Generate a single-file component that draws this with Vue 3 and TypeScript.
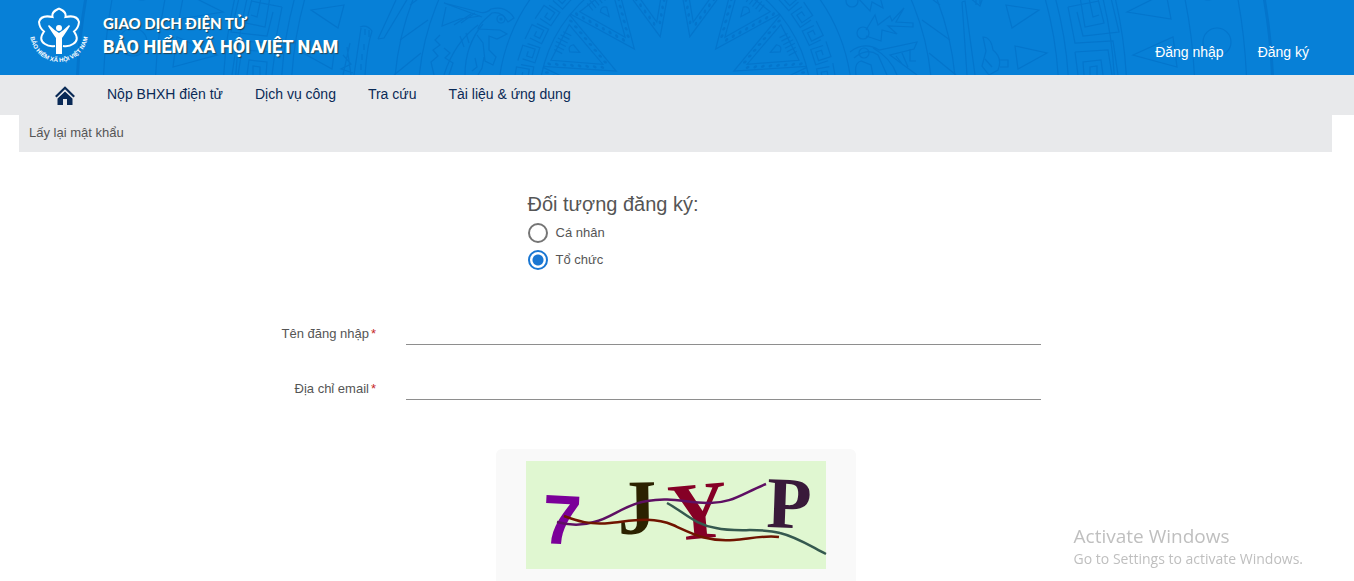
<script setup lang="ts">
import { ref } from 'vue'

interface Wave { d: string; color: string }
interface Glyph { char: string; x: number; y: number; size: number; angle: number; color: string; sans?: boolean }

const navItems: string[] = ['Nộp BHXH điện tử', 'Dịch vụ công', 'Tra cứu', 'Tài liệu & ứng dụng']
const subject = ref<'personal' | 'organization'>('organization')
const username = ref('')
const email = ref('')

const rings: number[] = [136, 177, 257, 281, 384, 394, 440, 452, 520, 572]
const rays: number[] = [-88, -63, -38, -13, 13, 38, 63, 88]
const dots: number[] = [0, 1, 2, 3, 4, 5, 6, 7]
const keys: number[] = Array.from({ length: 23 }, (_, i) => -88 + i * 8)

const glyphs: Glyph[] = [
  { char: '7', x: 15, y: 82, size: 70, angle: 3, color: '#7b0099', sans: true },
  { char: 'J', x: 92, y: 73, size: 78, angle: -1, color: '#2c2200' },
  { char: 'Y', x: 145, y: 80, size: 82, angle: -5, color: '#850026' },
  { char: 'P', x: 240, y: 66, size: 73, angle: 2, color: '#391a3a' }
]
const waves: Wave[] = [
  { d: 'M31 61 C42 64 55 65 68 61 C86 57 99 43 121 40 C143 36 158 41 181 42 C205 43 217 32 240 23', color: '#5e0f63' },
  { d: 'M38 55 C51 60 64 64 84 62 C105 60 126 55 147 64 C169 74 182 81 208 79 C222 78 238 74 253 76', color: '#701400' },
  { d: 'M141 42 C158 51 169 64 190 67 C211 72 232 66 254 72 C271 76 286 86 300 93', color: '#35594f' }
]
</script>

<template>
  <div class="page">
    <header class="banner">
      <svg class="pattern" viewBox="0 0 1354 75" preserveAspectRatio="xMidYMin slice" aria-hidden="true">
        <g class="etch">
          <circle v-for="r in rings" :key="r" cx="675" cy="101" :r="r" />
          <circle class="thick" cx="675" cy="101" r="598" />
          <g v-for="a in rays" :key="'ray' + a" :transform="`rotate(${a} 675 101)`">
            <path d="M646 -32 L675 35 L704 -32 M655 -28 L675 20 L695 -28 Z" />
            <path d="M666 -30 v9 M670 -31 v10 M674 -32 v11 M678 -32 v11 M682 -31 v10 M686 -30 v9 M671 -15 q4 -5 8 0 l-4 9z" />
            <template v-for="n in dots" :key="n">
              <ellipse class="dot" :cx="651 + n * 3" :cy="-28 + n * 7" rx="1.3" ry="2" />
              <ellipse class="dot" :cx="699 - n * 3" :cy="-28 + n * 7" rx="1.3" ry="2" />
            </template>
          </g>
          <g v-for="a in keys" :key="'key' + a" :transform="`rotate(${a} 675 101)`">
            <path d="M665 -61 H681 V-48 H672 V-54 H677 M668 -57 V-44 H684 V-57" />
          </g>
          <g v-for="side in [1, -1]" :key="side" :transform="side === 1 ? undefined : 'translate(1350 0) scale(-1 1)'">
            <path d="M1006 5 L1039 10 L1012 28 Z M1015 46 L1047 53 L1018 69 Z" />
            <path d="M1127 12 L1155 -2 L1167 -2 L1171 19 Z M1133 55 L1173 37 L1177 67 Z" />
            <circle cx="1217" cy="42" r="14" />
            <circle cx="1208" cy="-9" r="9" />
            <path d="M1080 -3 L1085 27 L1104 23 L1098 -1 M1089 -2 L1093 17 L1099 15 M1068 7 L1099 1 M1068 7 L1075 43 L1113 41 L1118 75 M1077 12 L1083 36 L1119 32 L1111 -2 M1075 52 L1108 50 L1112 75 M1075 52 L1078 75 M1084 75 L1083 62 L1101 60 L1103 75 M1090 75 V67 L1097 66 V75" />
            <path d="M922 20 L950 40 M929 53 L956 75 M928 -4 L940 5" />
          </g>
          <path d="M444 3 L479 12 Q486 14 491 9 Q506 5 514 18 L508 22 Q502 11 492 13 Q478 25 478 29 L500 30 L507 34 L497 39 L489 36 L489 50 L496 57 L493 65 L485 61 L483 43 L477 35 M446 7 L442 26 L460 19 L480 16 M444 3 L482 17 M461 23 L475 13 M454 25 L471 14 M478 25 Q454 43 444 75 M483 24 Q465 45 465 75" />
          <circle cx="501" cy="19" r="4" /><circle cx="501" cy="19" r="1" />
          <path d="M440 35 L435 40 L440 45 L433 50 L438 56 L431 62 L434 75 M444 48 L450 53 L445 58 L453 63 L449 75 M460 36 L464 47 M466 33 L469 43 M484 57 L482 68 L478 75 M475 58 L477 67 L472 71" />
          <path d="M360 27 Q367 24 372 31 Q367 46 365 75 M361 28 L354 75 M350 43 L343 75 M347 47 L351 75 M343 55 L351 64 L341 69 L353 73 M364 44 V50 M362 54 V60 M361 64 V70 M378 39 L396 0 M378 39 L384 38 L408 -2 M365 29 v6 M369 30 v7" />
          <circle cx="852" cy="1" r="6" />
          <path d="M857 -3 L870 11 L872 2 L883 8 L880 -3 M866 30 L875 15 L878 25 L890 16 L892 21 L904 8 L896 22 L913 23 L913 27 L888 26 L897 34 L882 30 L881 41 L866 36" />
          <circle cx="863" cy="33" r="6" />
          <path d="M850 52 Q864 41 879 50 L917 42 L914 49 L890 55 L917 75 M854 58 Q867 47 878 55 L887 75 M873 48 Q891 58 897 75 M856 75 Q854 63 861 61 L871 65 L873 75 M910 49 V61 H916 M896 56 L903 65 M902 53 L908 67" />
          <circle cx="864" cy="53" r="5" />
          <path d="M962 2 L965 1 L975 75 M962 2 L967 75 M970 -2 L980 6 L983 -3 M976 -2 V5 M980 -2 V4 M983 37 Q991 37 993 50 Q1003 58 998 70 L989 75 L982 66 L986 51 Z M1000 60 H1008 V67 H1000 M985 59 L992 67" />
        </g>
      </svg>

      <a class="brand" href="#" aria-label="Giao dịch điện tử Bảo hiểm xã hội Việt Nam">
        <svg class="logo" viewBox="0 0 60 60" aria-hidden="true">
          <defs><path id="seal-arc" d="M1 28 A29 29 0 0 0 59 28" /></defs>
          <path class="flower" d="M30 3.500 Q38 7 36.500 12 Q48 9.500 50 17 Q49.500 23 45 26.500 Q51 35 44 39 Q40 42 34 41 M30 3.500 Q22 7 23.500 12 Q12 9.500 10 17 Q10.500 23 15 26.500 Q9 35 16 39 Q20 42 26 41" />
          <circle cx="30" cy="23" r="3" fill="#fff" />
          <path fill="#fff" d="M20 20 Q25 25 30 28 Q35 25 40 20 L41 21 Q36 29 33 33 L33 49 H27 L27 33 Q24 29 19 21 Z" />
          <text class="seal"><textPath href="#seal-arc" startOffset="50%" text-anchor="middle">BẢO HIỂM XÃ HỘI VIỆT NAM</textPath></text>
        </svg>
        <span class="titles">
          <span class="title-small">GIAO DỊCH ĐIỆN TỬ</span>
          <span class="title-large">BẢO HIỂM XÃ HỘI VIỆT NAM</span>
        </span>
      </a>
      <div class="account">
        <a href="#">Đăng nhập</a>
        <a href="#">Đăng ký</a>
      </div>
    </header>

    <nav class="menu">
      <a class="home" href="#" aria-label="Trang chủ">
        <svg viewBox="0 0 20 20" aria-hidden="true">
          <path d="M10 5.500 L17.500 12.500 V19 H12 V13 H8 V19 H2.500 V12.500 Z" fill="#0a2a56" />
          <path d="M0.800 10.700 L10 1.700 L19.200 10.700" fill="none" stroke="#0a2a56" stroke-width="2.200" />
          <path d="M1.800 12.300 L10 4.300 L18.200 12.300" fill="none" stroke="#e8e9eb" stroke-width="1" />
        </svg>
      </a>
      <a v-for="item in navItems" :key="item" href="#">{{ item }}</a>
    </nav>

    <main>
      <h1 class="crumb">Lấy lại mật khẩu</h1>
      <form @submit.prevent>
        <fieldset class="subject">
          <legend>Đối tượng đăng ký:</legend>
          <label><input v-model="subject" type="radio" name="subject" value="personal" />Cá nhân</label>
          <label><input v-model="subject" type="radio" name="subject" value="organization" />Tổ chức</label>
        </fieldset>

        <div class="field">
          <label for="username">Tên đăng nhập<span class="required">*</span></label>
          <input id="username" v-model="username" type="text" required />
        </div>
        <div class="field">
          <label for="email">Địa chỉ email<span class="required">*</span></label>
          <input id="email" v-model="email" type="email" required />
        </div>

        <div class="captcha">
          <svg viewBox="0 0 300 108" role="img" aria-label="Captcha">
            <rect width="300" height="108" fill="#e0f7d1" />
            <text
              v-for="g in glyphs"
              :key="g.char"
              :class="{ sans: g.sans }"
              :x="g.x"
              :y="g.y"
              :font-size="g.size"
              :fill="g.color"
              :transform="`rotate(${g.angle} ${g.x} ${g.y})`"
            >{{ g.char }}</text>
            <path v-for="w in waves" :key="w.color" :d="w.d" :stroke="w.color" fill="none" stroke-width="2.500" />
          </svg>
        </div>
      </form>
    </main>

    <aside class="activation">
      <strong>Activate Windows</strong>
      <span>Go to Settings to activate Windows.</span>
    </aside>
  </div>
</template>

<style>
body {
  margin: 0;
  background: #fff;
}
</style>

<style scoped>
.page {
  font-family: "Liberation Sans", Arial, sans-serif;
  font-size: 13px;
  color: #555;
}
a {
  text-decoration: none;
}
.banner {
  position: relative;
  display: flex;
  justify-content: space-between;
  height: 75px;
  overflow: hidden;
  background: #0780d7;
}
.pattern {
  position: absolute;
  inset: 0;
  width: 100%;
  height: 100%;
}
.etch {
  fill: none;
  stroke: #0475cc;
  stroke-width: 1.2;
}
.etch .thick {
  stroke-width: 3;
}
.etch .dot {
  fill: #0475cc;
  stroke: none;
}
.brand {
  position: relative;
  display: flex;
  gap: 14px;
  padding: 5px 0 0 29px;
  color: #fff;
}
.logo {
  width: 60px;
  height: 60px;
  overflow: visible;
}
.flower {
  fill: none;
  stroke: #fff;
  stroke-width: 2;
}
.seal {
  fill: #fff;
  font-size: 6px;
  font-weight: bold;
}
.titles {
  display: flex;
  flex-direction: column;
  padding-top: 8px;
  white-space: nowrap;
  text-shadow: 1px 1px 1px #245;
}
.title-small {
  font: 900 15px/20px Lato, "Liberation Sans", sans-serif;
}
.title-large {
  font: 800 18px/28px Roboto, "Liberation Sans", sans-serif;
}
.account {
  position: relative;
  display: flex;
  gap: 34px;
  padding: 43px 45px 0 0;
  font-size: 14px;
  line-height: 18px;
}
.account a {
  color: #fff;
}
.menu {
  display: flex;
  gap: 32px;
  height: 40px;
  padding-left: 55px;
  background: #e8e9eb;
  font-size: 14px;
  line-height: 38px;
}
.menu a {
  color: #0a2a56;
}
.home svg {
  display: block;
  width: 20px;
  height: 20px;
  margin-top: 11px;
}
main {
  margin: 0 22px 0 19px;
}
.crumb {
  margin: 0;
  padding: 0 10px 2px;
  background: #e8e9eb;
  font-size: 13px;
  font-weight: normal;
  line-height: 35px;
}
.subject {
  width: 296px;
  margin: 38px auto 0;
  padding: 0;
  border: 0;
}
.subject legend {
  padding: 0 0 1px;
  font-size: 20px;
  line-height: 28px;
}
.subject label {
  display: flex;
  align-items: center;
  gap: 8px;
  height: 27px;
}
.subject input {
  appearance: none;
  box-sizing: border-box;
  width: 20px;
  height: 20px;
  margin: 0;
  border: 2px solid #757575;
  border-radius: 50%;
}
.subject input:checked {
  border-color: #1976d2;
  background: radial-gradient(circle, #1976d2 5px, transparent 6px);
}
.field {
  display: grid;
  grid-template-columns: 357fr 635fr 261fr;
  column-gap: 30px;
  margin-top: 25px;
}
.subject + .field {
  margin-top: 42px;
}
.field label {
  text-align: right;
  line-height: 16px;
  padding-top: 11px;
}
.required {
  margin-left: 2px;
  color: #c62828;
}
.field input {
  box-sizing: border-box;
  width: 100%;
  min-width: 0;
  height: 30px;
  padding: 0;
  border: 0;
  border-bottom: 1px solid #8e8e8e;
  border-radius: 0;
  outline: none;
  background: transparent;
  font: inherit;
}
.captcha {
  width: 300px;
  margin: 49px auto 0;
  padding: 12px 30px;
  border-radius: 6px 6px 0 0;
  background: #f9f9f9;
}
.captcha svg {
  display: block;
  width: 100%;
  overflow: visible;
}
.captcha text {
  font-family: "Liberation Serif", serif;
  font-weight: bold;
}
.captcha text.sans {
  font-family: "Liberation Sans", sans-serif;
}
.activation {
  position: fixed;
  right: 51px;
  bottom: 12px;
  display: flex;
  flex-direction: column;
  color: #bfbfbf;
  font: 14px/20px "Open Sans", "Noto Sans", sans-serif;
}
.activation strong {
  font-size: 19px;
  font-weight: 400;
  line-height: 26px;
}
</style>
